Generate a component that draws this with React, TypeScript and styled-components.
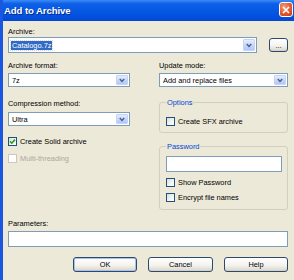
import React from 'react';
import styled, { createGlobalStyle } from 'styled-components';

const GlobalStyle = createGlobalStyle`
  html, body {
    margin: 0;
    padding: 0;
    background: #ECE9D8;
  }
  * {
    box-sizing: border-box;
  }
`;

const FONT = `'Liberation Sans', Arial, sans-serif`;

// 창 틀
const Window = styled.div`
  width: 294px;
  height: 280px;
  display: flex;
  flex-direction: column;
  border-left: 3px solid #1B56E0;
  background: #ECE9D8;
  overflow: hidden;
  font-family: ${FONT};
  font-size: 7.4px;
  color: #000;
`;

const TitleBar = styled.div`
  height: 21px;
  flex: none;
  display: flex;
  align-items: center;
  justify-content: space-between;
  padding: 0 1px 0 1px;
  background: linear-gradient(180deg, #3A8CF8 0%, #0F5FE6 18%, #0456E4 60%, #0348D3 100%);
`;

const Title = styled.span`
  font-family: ${FONT};
  font-weight: 700;
  font-size: 9.6px;
  color: #FFFFFF;
  text-shadow: 1px 1px 0 #0A2C8A;
  letter-spacing: -0.1px;
`;

const CloseButton = styled.div`
  width: 14px;
  height: 15px;
  margin-top: -2px;
  border: 1px solid #FFFFFF;
  border-radius: 3px;
  background: radial-gradient(circle at 35% 30%, #F29A7C 0%, #E2582F 55%, #C23A14 100%);
  display: flex;
  align-items: center;
  justify-content: center;
`;

const Body = styled.div`
  flex: 1;
  display: flex;
  flex-direction: column;
  padding: 6px 6px 0 5px;
`;

const Label = styled.div<{ top?: number }>`
  line-height: 9px;
  height: 9px;
  margin-top: ${p => p.top ?? 0}px;
  white-space: nowrap;
`;

const Row = styled.div<{ top?: number }>`
  display: flex;
  align-items: center;
  margin-top: ${p => p.top ?? 0}px;
`;

const Combo = styled.div<{ h?: number; top?: number }>`
  flex: 0 1 auto;
  width: 100%;
  height: ${p => p.h ?? 14}px;
  margin-top: ${p => p.top ?? 0}px;
  border: 1px solid #7F9DB9;
  background: #FFFFFF;
  display: flex;
  align-items: center;
  padding: 1px;
`;

const ComboText = styled.span<{ selected?: boolean }>`
  flex: 1;
  line-height: 9px;
  padding-left: 1px;
  white-space: nowrap;
  span {
    background: ${p => (p.selected ? '#316AC5' : 'transparent')};
    color: ${p => (p.selected ? '#FFFFFF' : '#000')};
    outline: ${p => (p.selected ? '1px dotted #C9D6EF' : 'none')};
    padding: 0 1px;
  }
`;

const DropButton = styled.div`
  width: 12px;
  align-self: stretch;
  border: 1px solid #C3D3FD;
  border-radius: 1px;
  background: linear-gradient(180deg, #E6EEFC 0%, #C1D3FB 60%, #B4C8F6 100%);
  display: flex;
  align-items: center;
  justify-content: center;
`;

const Chevron = () => (
  <svg width="6" height="5" viewBox="0 0 6 5">
    <path d="M0.8 1 L3 3.4 L5.2 1" stroke="#4D6185" strokeWidth="1.5" fill="none" />
  </svg>
);

const Dropdown: React.FC<{ value: string; selected?: boolean; h?: number; top?: number }> = ({ value, selected, h, top }) => (
  <Combo h={h} top={top}>
    <ComboText selected={selected}>
      <span>{value}</span>
    </ComboText>
    <DropButton>
      <Chevron />
    </DropButton>
  </Combo>
);

const Button = styled.div<{ w: number; h?: number; left?: number; isDefault?: boolean }>`
  width: ${p => p.w}px;
  flex: none;
  height: ${p => p.h ?? 15}px;
  margin-left: ${p => p.left ?? 0}px;
  border: 1px solid #2C4A6E;
  border-radius: 3px;
  background: linear-gradient(180deg, #FFFFFF 0%, #F4F3EE 55%, #D9D5C9 100%);
  box-shadow: ${p => (p.isDefault ? 'inset 0 0 0 1px #A9C1EA' : 'inset 0 -1px 0 #D6D0C5')};
  display: flex;
  align-items: center;
  justify-content: center;
  line-height: 9px;
`;

const Columns = styled.div`
  display: grid;
  grid-template-columns: 122px 129px;
  column-gap: 29px;
  margin-top: 8px;
`;

const Column = styled.div`
  display: flex;
  flex-direction: column;
`;

const Group = styled.fieldset<{ h: number; top: number }>`
  margin: ${p => p.top}px 0 0 0;
  padding: 0 5px 0 6px;
  height: ${p => p.h}px;
  border: 1px solid #D0D0BF;
  border-radius: 3px;
  display: flex;
  flex-direction: column;
  min-width: 0;
`;

const Legend = styled.legend`
  padding: 0 1px;
  margin-left: 0;
  line-height: 9px;
  color: #0046D5;
  font-size: 7.4px;
`;

const CheckRow = styled.div<{ top?: number; disabled?: boolean }>`
  display: flex;
  align-items: center;
  gap: 3px;
  height: 9px;
  margin-top: ${p => p.top ?? 0}px;
  color: ${p => (p.disabled ? '#ACA899' : '#000')};
  line-height: 9px;
  white-space: nowrap;
`;

const Box = styled.div<{ disabled?: boolean }>`
  width: 9px;
  height: 9px;
  flex: none;
  border: 1px solid ${p => (p.disabled ? '#CAC8BB' : '#1C5180')};
  background: ${p => (p.disabled ? '#FFFFFF' : 'linear-gradient(135deg, #DCDCD7 0%, #F5F4EF 60%, #FFFFFF 100%)')};
  display: flex;
  align-items: center;
  justify-content: center;
`;

const Check: React.FC<{ label: string; checked?: boolean; disabled?: boolean; top?: number }> = ({ label, checked, disabled, top }) => (
  <CheckRow top={top} disabled={disabled}>
    <Box disabled={disabled}>
      {checked && (
        <svg width="7" height="7" viewBox="0 0 7 7">
          <path d="M1 3.4 L2.8 5.2 L6 1.6" stroke="#21A121" strokeWidth="1.6" fill="none" />
        </svg>
      )}
    </Box>
    <span>{label}</span>
  </CheckRow>
);

const TextInput = styled.div<{ h: number; top: number }>`
  height: ${p => p.h}px;
  flex: none;
  margin-top: ${p => p.top}px;
  border: 1px solid #7F9DB9;
  background: #FFFFFF;
`;

const ButtonBar = styled.div`
  display: flex;
  justify-content: flex-end;
  gap: 11px;
  margin-top: 10px;
`;

export default function App() {
  return (
    <>
      <GlobalStyle />
      <Window>
        <TitleBar>
          <Title>Add to Archive</Title>
          <CloseButton>
            <svg width="8" height="8" viewBox="0 0 8 8">
              <path d="M1 1 L7 7 M7 1 L1 7" stroke="#FFFFFF" strokeWidth="1.6" />
            </svg>
          </CloseButton>
        </TitleBar>
        <Body>
          <Label>Archive:</Label>
          <Row top={1}>
            <Dropdown value="Catalogo.7z" selected h={16} />
            <Button w={19} h={14} left={12}>...</Button>
          </Row>
          <Columns>
            <Column>
              <Label>Archive format:</Label>
              <Dropdown value="7z" top={3} />
              <Label top={12}>Compression method:</Label>
              <Dropdown value="Ultra" top={4} />
              <Check label="Create Solid archive" checked top={11} />
              <Check label="Multi-threading" disabled top={8} />
            </Column>
            <Column>
              <Label>Update mode:</Label>
              <Dropdown value="Add and replace files" top={3} />
              <Group h={35} top={11}>
                <Legend>Options</Legend>
                <Check label="Create SFX archive" top={10} />
              </Group>
              <Group h={68} top={9}>
                <Legend>Password</Legend>
                <TextInput h={16} top={5} />
                <Check label="Show Password" top={6} />
                <Check label="Encrypt file names" top={6} />
              </Group>
            </Column>
          </Columns>
          <Label top={9}>Parameters:</Label>
          <TextInput h={16} top={3} />
          <ButtonBar>
            <Button w={64} isDefault>OK</Button>
            <Button w={65}>Cancel</Button>
            <Button w={64}>Help</Button>
          </ButtonBar>
        </Body>
      </Window>
    </>
  );
}
